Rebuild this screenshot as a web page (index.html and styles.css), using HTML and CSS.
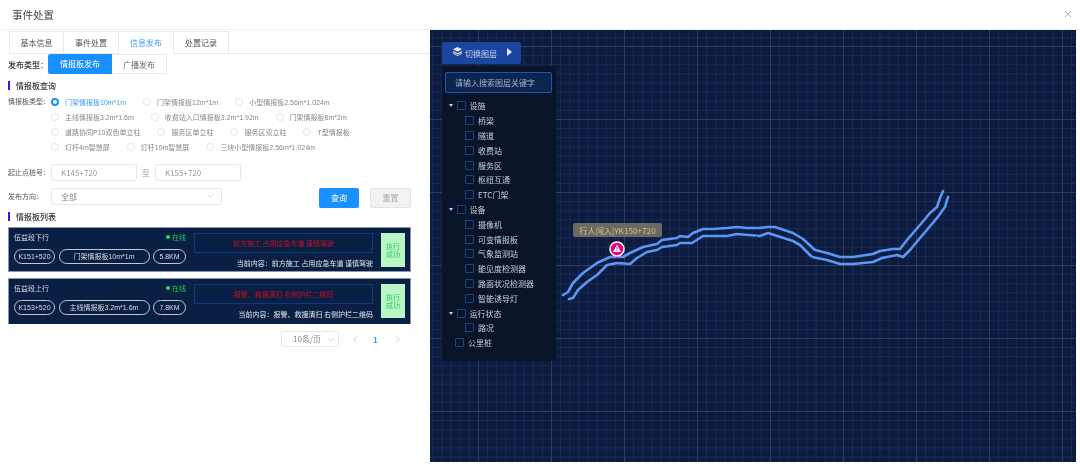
FILE: index.html
```html
<!DOCTYPE html>
<html lang="zh">
<head>
<meta charset="utf-8">
<title>事件处置</title>
<link rel="stylesheet" href="styles.css">
</head>
<body>
<header class="top">
  <h1 class="top-title">事件处置</h1>
  <svg class="close" width="8" height="8" viewBox="0 0 8 8"><path d="M1 1l6 6M7 1L1 7" stroke="#b4b4b4" stroke-width="1" fill="none"/></svg>
</header>
<main class="main">
  <section class="left">
    <nav class="tabs">
      <span class="tab">基本信息</span>
      <span class="tab">事件处置</span>
      <span class="tab tab-on">信息发布</span>
      <span class="tab">处置记录</span>
    </nav>
    <div class="pub">
      <span class="pub-label">发布类型：</span>
      <span class="seg seg-on">情报板发布</span>
      <span class="seg">广播发布</span>
    </div>
    <h2 class="sec sec-a">情报板查询</h2>
    <div class="types">
      <span class="f-label">情报板类型：</span>
      <div class="rows">
        <div class="row">
          <span class="opt opt-on"><i class="dot"></i>门架情报板10m*1m</span>
          <span class="opt"><i class="dot"></i>门架情报板12m*1m</span>
          <span class="opt"><i class="dot"></i>小型情报板2.56m*1.024m</span>
        </div>
        <div class="row">
          <span class="opt"><i class="dot"></i>主线情报板3.2m*1.6m</span>
          <span class="opt"><i class="dot"></i>收费站入口情报板3.2m*1.92m</span>
          <span class="opt"><i class="dot"></i>门架情报板8m*2m</span>
        </div>
        <div class="row">
          <span class="opt"><i class="dot"></i>道路协同P10双色单立柱</span>
          <span class="opt"><i class="dot"></i>服务区单立柱</span>
          <span class="opt"><i class="dot"></i>服务区双立柱</span>
          <span class="opt"><i class="dot"></i>T型情报板</span>
        </div>
        <div class="row">
          <span class="opt"><i class="dot"></i>灯杆4m智慧屏</span>
          <span class="opt"><i class="dot"></i>灯杆10m智慧屏</span>
          <span class="opt"><i class="dot"></i>三块小型情报板2.56m*1.024m</span>
        </div>
      </div>
    </div>
    <div class="range">
      <span class="f-label">起止点桩号：</span>
      <span class="input">K145+720</span>
      <span class="to">至</span>
      <span class="input">K155+720</span>
    </div>
    <div class="dir">
      <span class="f-label">发布方向：</span>
      <span class="select">全部
        <svg class="chev" width="7" height="4" viewBox="0 0 7 4"><path d="M.5.5l3 3 3-3" stroke="#c4c4c4" stroke-width=".8" fill="none"/></svg>
      </span>
      <span class="btn btn-pri">查询</span>
      <span class="btn btn-off">重置</span>
    </div>
    <h2 class="sec sec-b">情报板列表</h2>
    <article class="card">
      <div class="c-left">
        <div class="c-head"><span>伍益段下行</span><span class="online"><i class="on-dot"></i>在线</span></div>
        <div class="pills"><span class="pill p1">K151+520</span><span class="pill p2">门架情报板10m*1m</span><span class="pill p3">5.8KM</span></div>
      </div>
      <div class="c-mid">
        <div class="screen">前方施工 占用应急车道 谨慎驾驶</div>
        <div class="current">当前内容：前方施工 占用应急车道 谨慎驾驶</div>
      </div>
      <div class="ok">执行<br>成功</div>
    </article>
    <article class="card card-b">
      <div class="c-left">
        <div class="c-head"><span>伍益段上行</span><span class="online"><i class="on-dot"></i>在线</span></div>
        <div class="pills"><span class="pill p1">K153+520</span><span class="pill p2">主线情报板3.2m*1.6m</span><span class="pill p3">7.8KM</span></div>
      </div>
      <div class="c-mid">
        <div class="screen">报警、救援清扫 右侧护栏二维码</div>
        <div class="current">当前内容：报警、救援清扫 右侧护栏二维码</div>
      </div>
      <div class="ok">执行<br>成功</div>
    </article>
    <div class="pager">
      <span class="size">10条/页
        <svg class="chev" width="6" height="4" viewBox="0 0 6 4"><path d="M.5.5L3 3 5.500.5" stroke="#c4c4c4" stroke-width=".8" fill="none"/></svg>
      </span>
      <svg class="arrow" width="5" height="7" viewBox="0 0 5 7"><path d="M4 .5l-3 3 3 3" stroke="#c0c4cc" stroke-width=".9" fill="none"/></svg>
      <span class="page">1</span>
      <svg class="arrow" width="5" height="7" viewBox="0 0 5 7"><path d="M1 .5l3 3-3 3" stroke="#c0c4cc" stroke-width=".9" fill="none"/></svg>
    </div>
  </section>
  <section class="map">
    <svg class="road" viewBox="430 30 646 432" width="646" height="432">
      <defs>
        <filter id="wobble" x="430" y="30" width="646" height="432" filterUnits="userSpaceOnUse" color-interpolation-filters="sRGB">
          <feTurbulence type="fractalNoise" baseFrequency="0.2" numOctaves="1" seed="4" result="n"/>
          <feDisplacementMap in="SourceGraphic" in2="n" scale="1.600" xChannelSelector="R" yChannelSelector="G"/>
        </filter>
      </defs>
      <g class="road-group">
        <path class="road-line" d="M563 295L568 292L573 283L583 273L597 263L610 257L623 257L630 253L643 247L657 244L662 240L677 238L680 236L688 237L693 233L703 229L713 229L727 228L737 227L747 228L760 228L767 227L775 227L793 233L803 239L815 250L827 253L840 257L853 257L873 254L880 251L893 249L900 249L907 240L920 225L930 213L937 207L940 198L943 191"/>
        <path class="road-line" d="M569 299L573 298L578 290L587 282L597 275L607 265L617 263L630 264L637 258L647 252L657 250L662 247L677 245L680 243L692 243L703 236L727 236L737 234L760 236L768 233L793 241L800 245L812 257L827 260L840 264L853 264L873 262L882 258L897 255L903 257L910 250L920 238L937 218L945 207L948 197"/>
      </g>
    </svg>
    <div class="layers">
      <div class="layer-btn">
        <svg class="layer-ico" width="9" height="9" viewBox="0 0 9 9"><path d="M4.500 0L9 2.200 4.500 4.400 0 2.200z" fill="#e8eef8"/><path d="M0 4l4.500 2.200L9 4v1.200L4.500 7.400 0 5.200zM0 6l4.500 2.200L9 6v.8L4.500 9 0 6.800z" fill="#e8eef8"/></svg>
        <span>切换图层</span>
        <i class="tri"></i>
      </div>
      <div class="layer-panel">
        <div class="search">请输入搜索图层关键字</div>
        <ul class="tree">
          <li class="node"><i class="caret"></i><i class="box"></i>设施</li>
          <li class="node leaf"><i class="box"></i>桥梁</li>
          <li class="node leaf"><i class="box"></i>隧道</li>
          <li class="node leaf"><i class="box"></i>收费站</li>
          <li class="node leaf"><i class="box"></i>服务区</li>
          <li class="node leaf"><i class="box"></i>枢纽互通</li>
          <li class="node leaf"><i class="box"></i>ETC门架</li>
          <li class="node"><i class="caret"></i><i class="box"></i>设备</li>
          <li class="node leaf"><i class="box"></i>摄像机</li>
          <li class="node leaf"><i class="box"></i>可变情报板</li>
          <li class="node leaf"><i class="box"></i>气象监测站</li>
          <li class="node leaf"><i class="box"></i>能见度检测器</li>
          <li class="node leaf"><i class="box"></i>路面状况检测器</li>
          <li class="node leaf"><i class="box"></i>智能诱导灯</li>
          <li class="node"><i class="caret"></i><i class="box"></i>运行状态</li>
          <li class="node leaf"><i class="box"></i>路况</li>
          <li class="node plain"><i class="box"></i>公里桩</li>
        </ul>
      </div>
    </div>
    <div class="tip">行人闯入|YK150+720</div>
    <svg class="pin" width="16" height="19" viewBox="0 0 16 19">
      <path d="M5 13l3 5 3-5z" fill="#e6007a"/>
      <circle cx="8" cy="8" r="7" fill="#e6007a" stroke="#fff" stroke-width="1.500"/>
      <path d="M8 3.500L12 11H4z" fill="#fff"/>
      <path d="M8 6v2.500M8 9.200v.8" stroke="#e6007a" stroke-width="1"/>
    </svg>
  </section>
</main>
</body>
</html>
```
FILE: styles.css
```css
* { box-sizing: border-box; margin: 0; padding: 0; }
html, body { width: 1080px; height: 464px; overflow: hidden; background: #fff; }
body { font-family: "Noto Sans CJK SC", "Noto Sans", sans-serif; font-size: 8px; color: #555; }
i { display: block; font-style: normal; }
ul { list-style: none; }

.top { height: 30px; display: flex; align-items: center; justify-content: space-between; padding: 0 8px 1px 12px; border-bottom: 1px solid #eef0f4; filter: blur(.3px); }
.top-title { font-size: 10.500px; font-weight: 400; color: #444; }
.close { display: block; margin-top: -1px; }

.main { display: flex; height: 432px; }
.left { width: 430px; padding: 1px 19px 0 8px; flex: none; filter: blur(.3px); }
.map { position: relative; width: 646px; height: 432px; flex: none; overflow: hidden; filter: blur(.3px);
  background-color: #0c1c40;
  background-image:
    linear-gradient(to right, #343b58 1.500px, transparent 1.500px),
    linear-gradient(to bottom, #343b58 1.500px, transparent 1.500px),
    linear-gradient(to right, #1a2a52 1px, transparent 1px),
    linear-gradient(to bottom, #1a2a52 1px, transparent 1px);
  background-size: 73px 73px, 73px 73px, 9.125px 9.125px, 9.125px 9.125px;
  background-position: 48px 0, 0 16px, 48px 0, 0 16px;
}

.tabs { display: flex; height: 23px; margin: 0 -19px 0 1px; border-bottom: 1px solid #e6eaf2; }
.tab { width: 55px; height: 23px; line-height: 22px; text-align: center; border: 1px solid #e6eaf2; border-left-width: 0; color: #555; }
.tab:first-child { border-left-width: 1px; }
.tab-on { color: #3d9df5; border-bottom-color: #fff; }

.pub { display: flex; align-items: center; height: 20px; }
.pub-label { width: 40px; font-weight: 500; color: #333; white-space: nowrap; }
.seg { height: 20px; line-height: 20px; text-align: center; width: 55px; border: 1px solid #e6eaf2; border-left: 0; border-radius: 0 2px 2px 0; color: #666; }
.seg-on { width: 64px; background: #1890ff; border: 0; color: #fff; border-radius: 2px 0 0 2px; }

.sec { height: 9px; line-height: 9px; font-size: 8px; font-weight: 500; color: #333; border-left: 2px solid #2222dd; padding-left: 6px; }
.sec-a { margin-top: 7px; }
.sec-b { margin-top: 4px; }

.types { display: flex; margin-top: 4px; }
.f-label { flex: none; width: 43px; font-size: 7px; line-height: 15px; color: #555; white-space: nowrap; }
.row { display: flex; gap: 17px; height: 15px; }
.opt { display: flex; align-items: center; font-family: "Liberation Sans", "Noto Sans CJK SC", sans-serif; font-size: 7px; color: #888; white-space: nowrap; }
.opt-on { color: #3d9df5; }
.dot { width: 8px; height: 8px; margin-right: 6px; border: 1px solid #e2e4e8; border-radius: 50%; background: #fff; }
.opt-on .dot { border: 2.500px solid #1890ff; }

.range { display: flex; align-items: center; height: 17px; margin-top: 10px; }
.input { width: 86px; height: 17px; line-height: 15px; padding-left: 9px; border: 1px solid #e6e8ec; border-radius: 2px; color: #999; }
.to { width: 18px; text-align: center; color: #999; }

.dir { display: flex; height: 20px; margin-top: 7px; }
.dir .f-label { line-height: 17px; }
.select { position: relative; display: flex; align-items: center; width: 171px; height: 17px; padding-left: 9px; border: 1px solid #e6e8ec; border-radius: 2px; color: #888; }
.select .chev { position: absolute; right: 7px; top: 5px; }
.btn { width: 40px; height: 20px; line-height: 20px; text-align: center; border-radius: 2px; }
.btn-pri { margin-left: auto; background: #1890ff; color: #fff; }
.btn-off { width: 41px; margin-left: 11px; background: #f2f2f2; border: 1px solid #e2e2e2; line-height: 18px; color: #aaa; }

.card { display: flex; height: 45px; margin-top: 6px; padding: 5px 5px 0 5px; background: #0a1f44; border: 1px solid #8c96aa; color: #d8dce4; font-size: 7px; }
.card-b { height: 46px; border-bottom: 0; }
.c-left { width: 172px; flex: none; }
.c-head { display: flex; justify-content: space-between; height: 8px; line-height: 8px; }
.online { display: flex; align-items: center; color: #1fc95a; }
.on-dot { width: 4px; height: 4px; margin-right: 2px; border-radius: 50%; background: #1fe060; }
.pills { display: flex; gap: 3.500px; margin-top: 8px; }
.pill { height: 15px; line-height: 13px; text-align: center; border: 1px solid #c4c8d2; border-radius: 8px; font-family: "Liberation Sans", "Noto Sans CJK SC", sans-serif; font-size: 7px; white-space: nowrap; }
.p1 { width: 41px; }
.p2 { width: 91px; }
.p3 { width: 33px; }
.c-mid { width: 179px; margin-left: 8px; flex: none; }
.screen { height: 20px; line-height: 18px; text-align: center; border: 1px solid #0f3a7e; color: #c8101e; }
.current { height: 10px; line-height: 10px; margin-top: 5px; text-align: right; color: #e4e8ee; white-space: nowrap; }
.ok { width: 24px; height: 34px; margin-left: 8px; padding-top: 9px; line-height: 8px; text-align: center; background: #b9f7c7; color: #2fc95a; }

.pager { display: flex; align-items: center; height: 16px; margin-top: 7px; padding-left: 273px; }
.size { position: relative; display: block; width: 58px; height: 16px; line-height: 14px; padding-left: 11px; border: 1px solid #e8e8ec; border-radius: 2px; color: #888; }
.size .chev { position: absolute; right: 4px; top: 6px; }
.arrow { display: block; flex: none; margin-left: 14px; }
.page { width: 5px; margin-left: 15px; font-weight: 600; color: #3d9df5; }
.page + .arrow { margin-left: 17px; }

.road { position: absolute; left: 0; top: 0; }
.road-group { filter: url(#wobble); }
.road-line { fill: none; stroke: #5b97f4; stroke-width: 2.600; stroke-linejoin: round; stroke-linecap: round; }

.layers { position: absolute; left: 12px; top: 12px; width: 114px; }
.layer-btn { display: flex; align-items: center; width: 79px; height: 22px; padding-left: 11px; background: #1a46a0; border-radius: 2px; color: #c8d4ea; }
.layer-ico { display: block; margin: -3px 3px 0 0; }
.tri { margin: -2px 0 0 10px; border-left: 5px solid #e8eef8; border-top: 4px solid transparent; border-bottom: 4px solid transparent; }
.layer-panel { height: 295px; margin-top: 2px; padding: 6px 4px 0 3px; background: #0a1428; }
.search { width: 107px; height: 21px; line-height: 19px; padding-left: 9px; background: #0b2450; border: 1px solid #1c58b0; border-radius: 2px; color: #a8b4c8; }
.tree { margin-top: 5.500px; }
.node { display: flex; align-items: center; height: 14.800px; padding-left: 10px; color: #c8d0dc; white-space: nowrap; }
.leaf { padding-left: 20px; }
.box { width: 9px; height: 9px; margin-right: 4px; border: 1px solid #14468e; border-radius: 1px; }
.caret { width: 0; margin: 0 4px 0 -6.500px; border-top: 3px solid #c8d0dc; border-left: 2.500px solid transparent; border-right: 2.500px solid transparent; }

.tip { position: absolute; left: 143px; top: 193px; width: 89px; height: 14px; line-height: 14px; text-align: center; background: #6a6a62; border-radius: 2px; color: #d0c084; font-size: 8.200px; white-space: nowrap; }
.pin { position: absolute; left: 179px; top: 211px; display: block; }
```
